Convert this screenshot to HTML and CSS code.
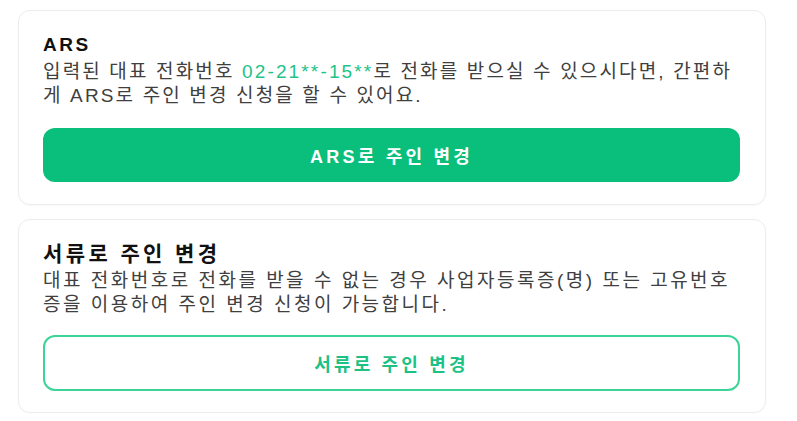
FILE: index.html
```html
<!DOCTYPE html>
<html lang="ko">
<head>
<meta charset="utf-8">
<link rel="stylesheet" href="styles.css">
</head>
<body>
<main class="page">
  <section class="card card-ars">
    <h2 class="card-title title-ars">ARS</h2>
    <p class="card-desc">입력된 대표 전화번호 <span class="phone">02-21**-15**</span>로 전화를 받으실 수 있으시다면, 간편하게 ARS로 주인 변경 신청을 할 수 있어요.</p>
    <button class="btn btn-solid">ARS로 주인 변경</button>
  </section>
  <section class="card card-doc">
    <h2 class="card-title title-doc">서류로 주인 변경</h2>
    <p class="card-desc desc-doc">대표 전화번호로 전화를 받을 수 없는 경우 사업자등록증(명) 또는 고유번호증을 이용하여 주인 변경 신청이 가능합니다.</p>
    <button class="btn btn-outline">서류로 주인 변경</button>
  </section>
</main>
</body>
</html>
```
FILE: styles.css
```css
* { box-sizing: border-box; }
html, body { margin: 0; padding: 0; background: #ffffff; }
body {
  font-family: "Liberation Sans", "Noto Sans CJK KR", sans-serif;
  color: #444;
}
.page {
  width: 766px;
  padding: 10px 0 0 18px;
  display: flex;
  flex-direction: column;
  gap: 14px;
}
.card {
  border: 1px solid #ececec;
  border-radius: 12px;
  padding: 22px 25px 22px 24px;
  display: flex;
  flex-direction: column;
  box-shadow: 0 1px 2px rgba(0,0,0,0.03);
}
.card-doc { padding-top: 22px; padding-bottom: 21px; }
.card-title {
  margin: 0;
  font-size: 19px;
  line-height: 24px;
  font-weight: 700;
  color: #111;
}
.title-ars { letter-spacing: 2.5px; }
.title-doc { font-size: 21px; letter-spacing: 3.4px; }
.card-desc {
  margin: 3px 0 0;
  font-size: 19px;
  line-height: 24px;
  letter-spacing: 2.15px;
  color: #404040;
}
.desc-doc { letter-spacing: 2.5px; }
.phone { color: #1dc388; }
.btn {
  margin-top: 20px;
  height: 54px;
  border-radius: 12px;
  font-family: inherit;
  font-size: 18px;
  font-weight: 700;
  letter-spacing: 3.2px;
  cursor: pointer;
}
.btn-solid {
  background: #0abf7b;
  color: #fff;
  border: none;
}
.btn-outline {
  margin-top: 18px;
  height: 56px;
  background: #fff;
  color: #1cc184;
  border: 2px solid #3dd497;
}
```
